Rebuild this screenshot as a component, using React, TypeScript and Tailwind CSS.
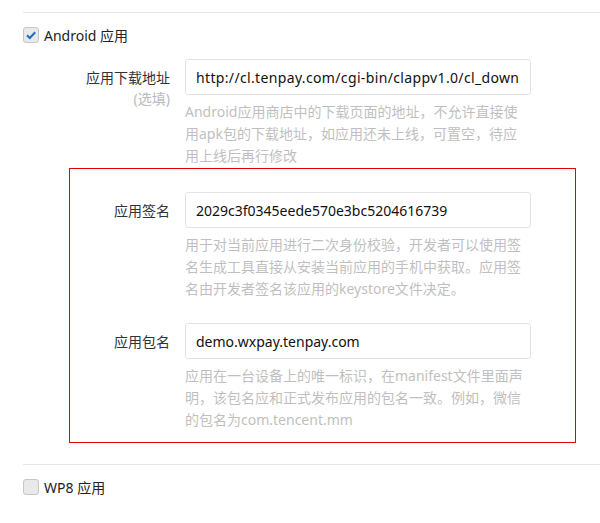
import React from "react";

const font = {
  fontFamily: '"Noto Sans", "Noto Sans CJK SC", sans-serif',
};

function Check({ checked }: { checked?: boolean }) {
  return (
    <span className="flex h-[16px] w-[16px] items-center justify-center rounded-[3px] border border-[#c6c6c6] bg-[#e9e9e9]">
      {checked && (
        <svg width="12" height="12" viewBox="0 0 12 12">
          <path d="M2 6.2 L4.8 9 L10.2 3.2" fill="none" stroke="#1a6fc4" strokeWidth="2" />
        </svg>
      )}
    </span>
  );
}

function Field({
  label,
  sub,
  value,
  help,
  labelW,
  wide,
}: {
  label: string;
  sub?: string;
  value: string;
  help: string[];
  labelW: string;
  wide?: boolean;
}) {
  return (
    <div className="flex">
      <div className={`${labelW} shrink-0 pr-[15px] text-right`}>
        <div className="flex h-[36px] items-center justify-end text-[14px] text-[#333]">{label}</div>
        {sub && <div className="-mt-[7px] text-[14px] leading-[22px] text-[#bbb]">{sub}</div>}
      </div>
      <div className="w-[346px]">
        <div className="flex h-[36px] items-center rounded-[3px] border border-[#e3e3e3] bg-white px-[10px] text-[14px] text-[#111]">
          <span className={`block min-w-0 flex-1 overflow-hidden whitespace-nowrap ${wide ? "tracking-[0.35px]" : ""}`}>
            {value}
          </span>
        </div>
        <div className="mt-[6px] text-[14px] leading-[22px] text-[#bfbfbf]">
          {help.map((l, i) => (
            <div key={i} className="whitespace-nowrap">
              {l}
            </div>
          ))}
        </div>
      </div>
    </div>
  );
}

export default function App() {
  return (
    <div className="h-[523px] w-[600px] overflow-hidden bg-white pt-[12px] pl-[23px]" style={font}>
      <div className="border-t border-[#e6e6e6]">
        <div className="mt-[14px] flex h-[16px] items-center gap-[5px] text-[14px] text-[#222]">
          <Check checked />
          <span>Android 应用</span>
        </div>
        <div className="mt-[16px]">
          <Field
            labelW="w-[162px]"
            label="应用下载地址"
            sub="(选填)"
            wide
            value="http://cl.tenpay.com/cgi-bin/clappv1.0/cl_download.cgi"
            help={[
              "Android应用商店中的下载页面的地址，不允许直接使",
              "用apk包的下载地址，如应用还未上线，可置空，待应",
              "用上线后再行修改",
            ]}
          />
        </div>
        <div className="ml-[46px] mt-[1px] w-[507px] border border-[#e60000] pt-[23px] pb-[11px]">
          <Field
            labelW="w-[115px]"
            label="应用签名"
            value="2029c3f0345eede570e3bc5204616739"
            help={[
              "用于对当前应用进行二次身份校验，开发者可以使用签",
              "名生成工具直接从安装当前应用的手机中获取。应用签",
              "名由开发者签名该应用的keystore文件决定。",
            ]}
          />
          <div className="mt-[23px]">
            <Field
              labelW="w-[115px]"
              label="应用包名"
              value="demo.wxpay.tenpay.com"
              help={[
                "应用在一台设备上的唯一标识，在manifest文件里面声",
                "明，该包名应和正式发布应用的包名一致。例如，微信",
                "的包名为com.tencent.mm",
              ]}
            />
          </div>
        </div>
        <div className="mt-[21px] border-t border-[#e6e6e6]">
          <div className="mt-[14px] flex h-[16px] items-center gap-[5px] text-[14px] text-[#222]">
            <Check />
            <span>WP8 应用</span>
          </div>
        </div>
      </div>
    </div>
  );
}
